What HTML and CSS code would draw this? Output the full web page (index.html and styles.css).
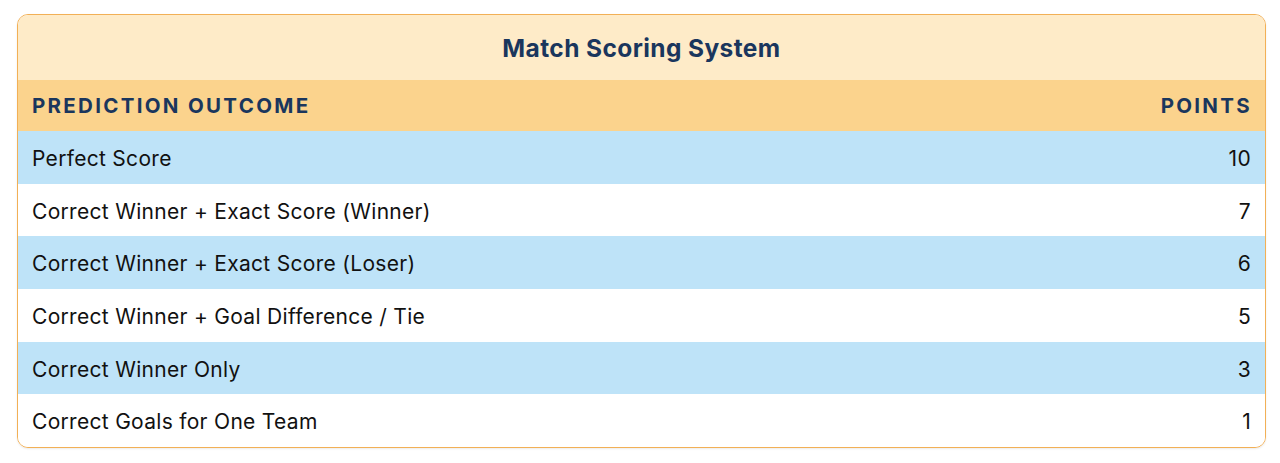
FILE: index.html
```html
<!DOCTYPE html>
<html>
<head>
<meta charset="utf-8">
<link rel="stylesheet" href="styles.css">
</head>
<body>
<div class="card">
  <table class="scores">
    <caption class="title">Match Scoring System</caption>
    <thead>
      <tr><th class="col-outcome">Prediction Outcome</th><th class="col-points">Points</th></tr>
    </thead>
    <tbody>
      <tr><td>Perfect Score</td><td class="num">10</td></tr>
      <tr><td>Correct Winner + Exact Score (Winner)</td><td class="num">7</td></tr>
      <tr><td>Correct Winner + Exact Score (Loser)</td><td class="num">6</td></tr>
      <tr><td>Correct Winner + Goal Difference / Tie</td><td class="num">5</td></tr>
      <tr><td>Correct Winner Only</td><td class="num">3</td></tr>
      <tr><td>Correct Goals for One Team</td><td class="num">1</td></tr>
    </tbody>
  </table>
</div>
</body>
</html>
```
FILE: styles.css
```css
html, body {
  margin: 0;
  padding: 0;
  background: #ffffff;
}
body {
  padding: 14px 14px 14px 17px;
  font-family: Inter, "Noto Sans", sans-serif;
  color: #111111;
}
.card {
  border: 1px solid #f2b056;
  border-radius: 11px;
  overflow: hidden;
  box-shadow: 0 1px 2px rgba(0,0,0,0.08);
}
.scores {
  width: 100%;
  border-collapse: collapse;
}
.title {
  background: #feebc8;
  color: #1a365d;
  font-size: 24.5px;
  font-weight: 700;
  letter-spacing: 0.4px;
  height: 65px;
  line-height: 66px;
  padding: 0;
  text-align: center;
}
thead tr {
  background: #fbd38d;
}
th {
  color: #1a365d;
  font-size: 20.5px;
  font-weight: 700;
  text-transform: uppercase;
  letter-spacing: 2.3px;
  height: 51px;
  padding: 0 14px;
  text-align: left;
}
th.col-points {
  text-align: right;
  padding-right: 13px;
}
td {
  font-size: 21px;
  letter-spacing: 0.3px;
  height: 52.7px;
  padding: 3px 14px 0;
  line-height: 24px;
  box-sizing: border-box;
}
tbody tr:nth-child(odd) {
  background: #bee3f8;
}
tbody tr:nth-child(even) {
  background: #ffffff;
}
td.num {
  text-align: right;
}
```
